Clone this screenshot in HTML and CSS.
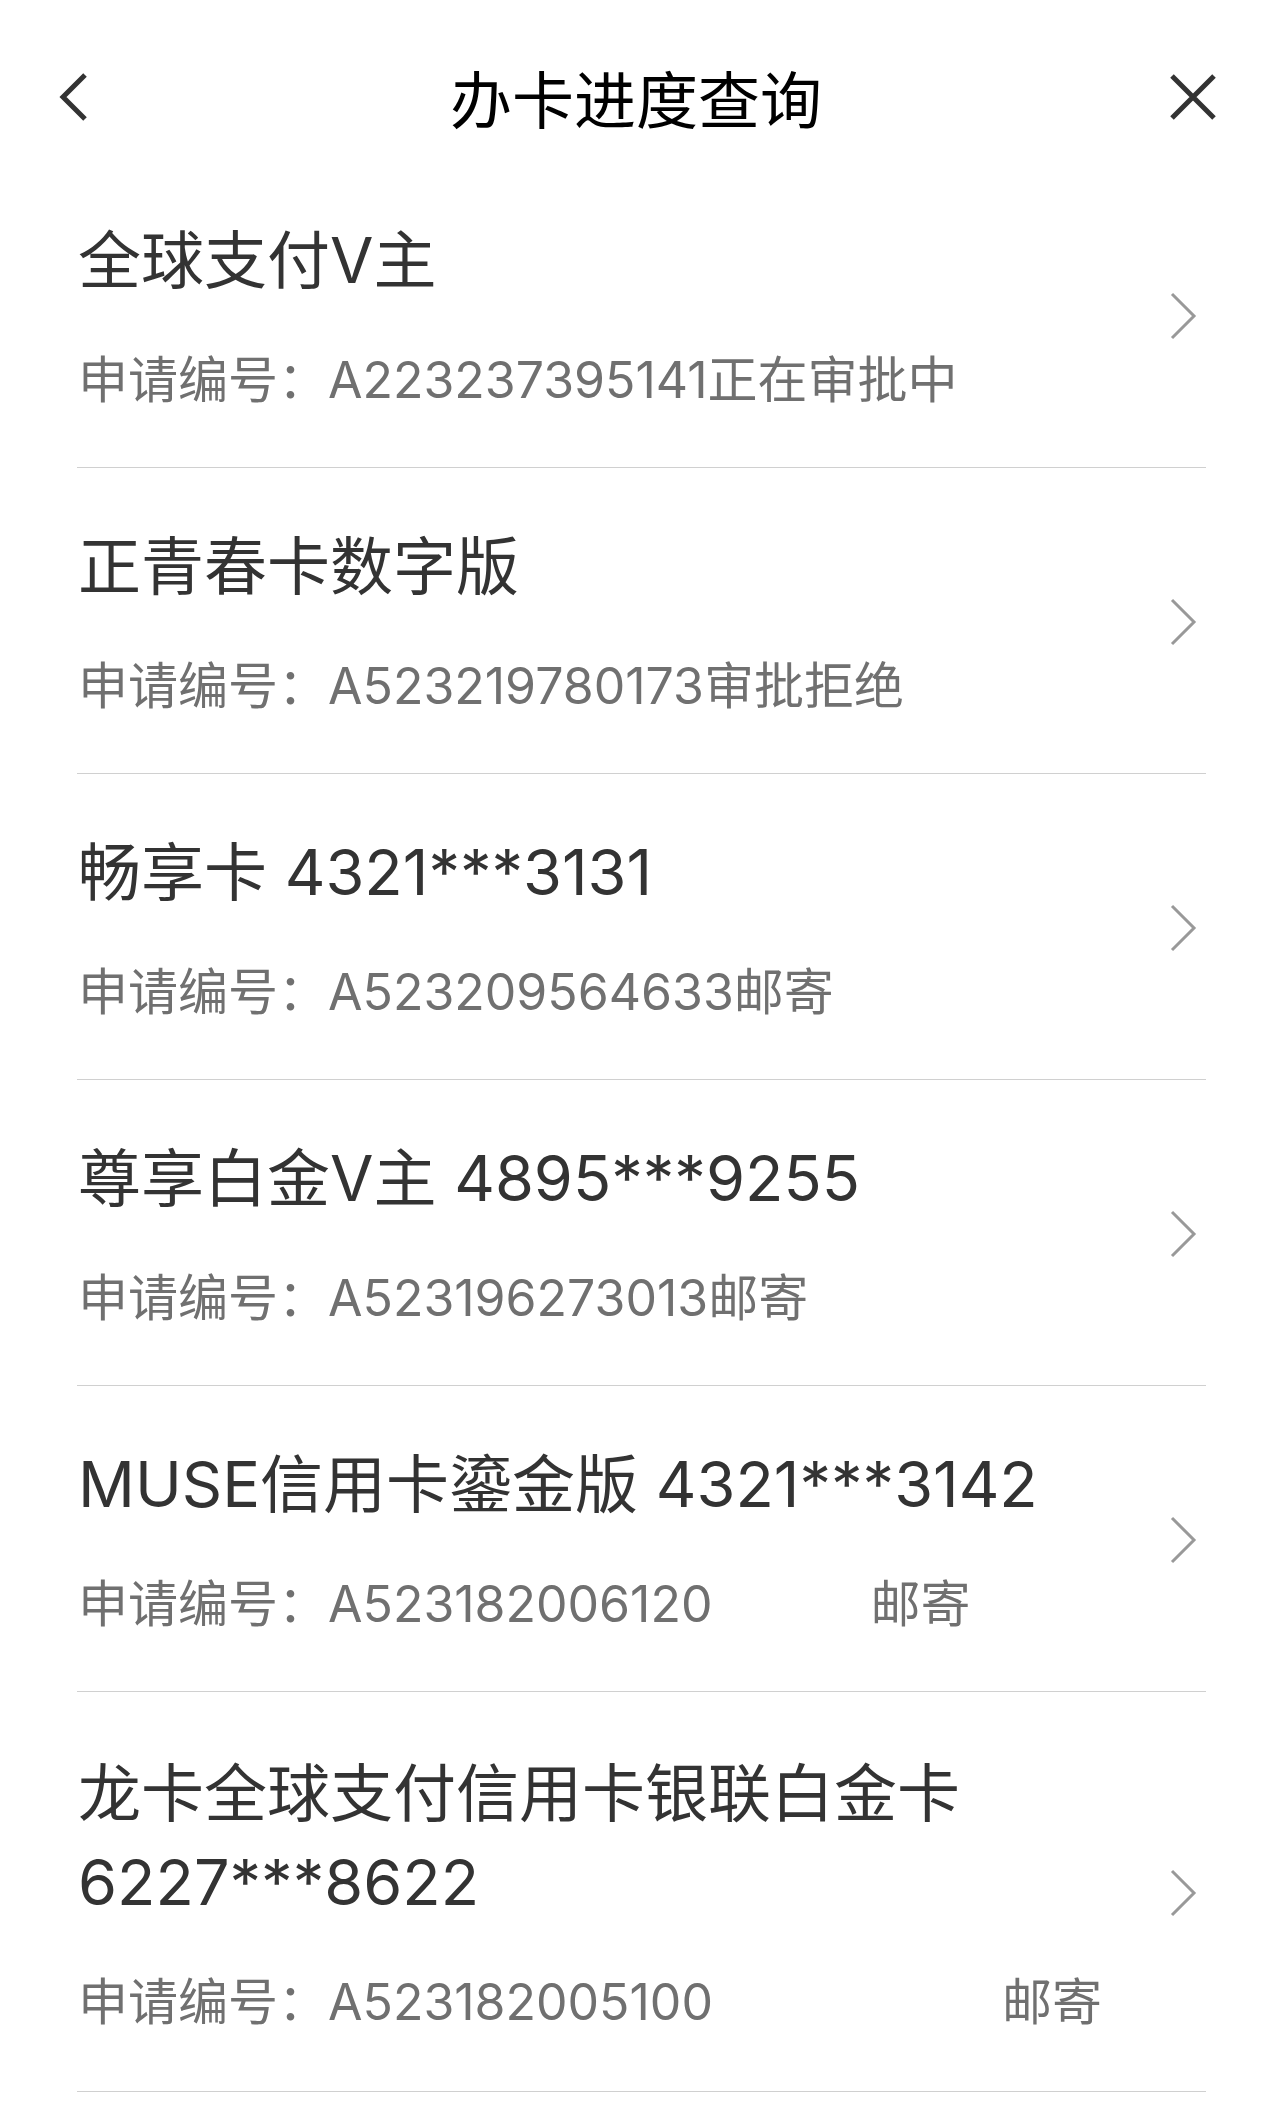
FILE: index.html
```html
<!DOCTYPE html>
<html lang="zh-CN">
<head>
  <meta charset="UTF-8">
  <title>办卡进度查询</title>
  <link rel="stylesheet" href="styles.css">
</head>
<body>
  <div class="topbar">
    <a class="nav-btn back">
      <svg width="40" height="60" viewBox="0 0 40 60"><polyline points="31,8 9,30 31,52" fill="none" stroke="#333" stroke-width="5"/></svg>
    </a>
    <h1>办卡进度查询</h1>
    <a class="nav-btn close">
      <svg width="50" height="50" viewBox="0 0 50 50"><path d="M4 4 L46 46 M46 4 L4 46" fill="none" stroke="#333" stroke-width="5"/></svg>
    </a>
  </div>

  <ul class="apply-list">
    <li class="apply-item">
      <div class="info">
        <div class="card-name">全球支付V主</div>
        <div class="apply-no">申请编号：A223237395141<span class="status">正在审批中</span></div>
      </div>
      <svg class="arrow" width="30" height="48" viewBox="0 0 30 48"><polyline points="4,2 26,24 4,46" fill="none" stroke="#999" stroke-width="3"/></svg>
    </li>
    <li class="apply-item">
      <div class="info">
        <div class="card-name">正青春卡数字版</div>
        <div class="apply-no">申请编号：A523219780173<span class="status">审批拒绝</span></div>
      </div>
      <svg class="arrow" width="30" height="48" viewBox="0 0 30 48"><polyline points="4,2 26,24 4,46" fill="none" stroke="#999" stroke-width="3"/></svg>
    </li>
    <li class="apply-item">
      <div class="info">
        <div class="card-name">畅享卡 4321***3131</div>
        <div class="apply-no">申请编号：A523209564633<span class="status">邮寄</span></div>
      </div>
      <svg class="arrow" width="30" height="48" viewBox="0 0 30 48"><polyline points="4,2 26,24 4,46" fill="none" stroke="#999" stroke-width="3"/></svg>
    </li>
    <li class="apply-item">
      <div class="info">
        <div class="card-name">尊享白金V主 4895***9255</div>
        <div class="apply-no">申请编号：A523196273013<span class="status">邮寄</span></div>
      </div>
      <svg class="arrow" width="30" height="48" viewBox="0 0 30 48"><polyline points="4,2 26,24 4,46" fill="none" stroke="#999" stroke-width="3"/></svg>
    </li>
    <li class="apply-item">
      <div class="info">
        <div class="card-name">MUSE信用卡鎏金版 4321***3142</div>
        <div class="apply-no">申请编号：A523182006120<span class="status gap-md">邮寄</span></div>
      </div>
      <svg class="arrow" width="30" height="48" viewBox="0 0 30 48"><polyline points="4,2 26,24 4,46" fill="none" stroke="#999" stroke-width="3"/></svg>
    </li>
    <li class="apply-item tall">
      <div class="info">
        <div class="card-name">龙卡全球支付信用卡银联白金卡 6227***8622</div>
        <div class="apply-no">申请编号：A523182005100<span class="status gap-lg">邮寄</span></div>
      </div>
      <svg class="arrow" width="30" height="48" viewBox="0 0 30 48"><polyline points="4,2 26,24 4,46" fill="none" stroke="#999" stroke-width="3"/></svg>
    </li>
  </ul>
</body>
</html>
```

FILE: styles.css
```css
body {
  margin: 0;
  background: #fff;
  font-family: Inter, "Noto Sans CJK SC", sans-serif;
  color: #333;
}
.topbar {
  height: 130px;
  display: flex;
  align-items: center;
  justify-content: space-between;
  padding: 32px 66px 0 54px;
}
.topbar h1 {
  margin: 0;
  font-size: 62px;
  font-weight: 400;
  color: #000;
  flex: 1;
  text-align: center;
}
.nav-btn {
  display: flex;
  align-items: center;
  width: 60px;
}
.nav-btn.close {
  justify-content: flex-end;
}
.apply-list {
  list-style: none;
  margin: 0;
  padding: 0 78px 0 77px;
}
.apply-item {
  display: flex;
  align-items: center;
  padding: 54px 0 52px 1px;
  border-bottom: 1px solid #d0d0d0;
}
.apply-item.tall {
  padding-top: 57px;
  padding-bottom: 54px;
}
.info {
  flex: 1;
}
.card-name {
  font-size: 63px;
  line-height: 89px;
  color: #333;
  padding-right: 90px;
}
.apply-no {
  margin-top: 40px;
  font-size: 50px;
  line-height: 70px;
  color: #707070;
}
.status.gap-md {
  margin-left: 158px;
}
.status.gap-lg {
  margin-left: 289px;
}
.arrow {
  margin-right: 8px;
}
```
